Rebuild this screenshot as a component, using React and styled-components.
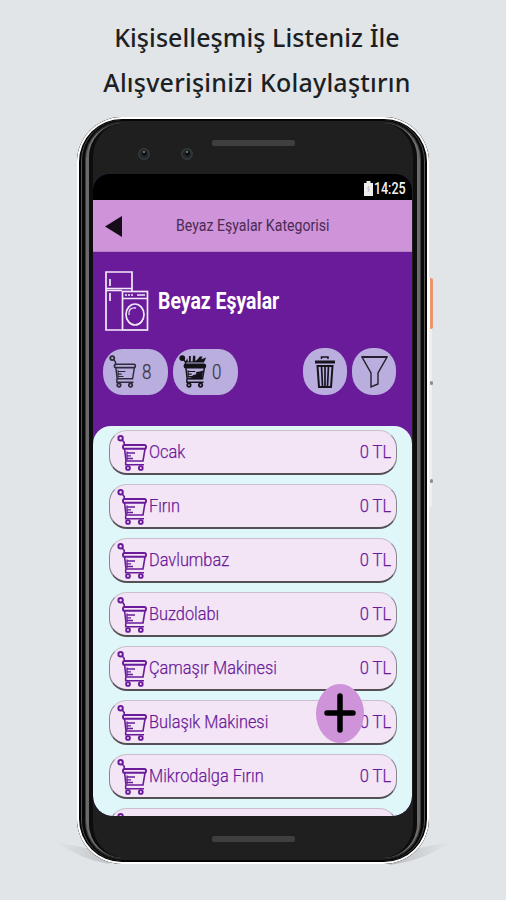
import React from "react";
import styled, { createGlobalStyle } from "styled-components";

const Global = createGlobalStyle`
  *{box-sizing:border-box}
  body{margin:0;background:#e1e5e8}
`;
const Page = styled.main`
  width:506px;height:900px;overflow:hidden;background:#e1e5e8;
  display:flex;flex-direction:column;align-items:center;
  font-family:Roboto,sans-serif;
`;
const Heading = styled.h1`
  margin:0;padding-top:15px;height:117px;display:flex;flex-direction:column;align-items:center;
  font:500 25px/45px "Noto Sans","Open Sans",sans-serif;color:#1c1f23;padding-left:8px;
`;
const Line = styled.span`
  display:block;white-space:nowrap;letter-spacing:${p => p.$ls}px;
`;
const Stage = styled.div`position:relative;width:352px;height:747px;`;
const Shadow = styled.svg`position:absolute;left:-30px;top:700px;`;
const SideKey = styled.i`
  position:absolute;left:351px;top:${p => p.$top}px;height:${p => p.$h}px;width:${p => p.$w}px;
  background:${p => p.$bg};border-radius:0 2px 2px 0;
`;
const SideDot = styled.i`
  position:absolute;left:353px;top:${p => p.$top}px;width:3px;height:4px;border-radius:2px;background:#8b8b8d;
`;
const Phone = styled.section`
  position:relative;width:352px;height:747px;border-radius:45px;padding:57px 17px 0 16px;
  background:#1f1f1f;
  box-shadow:inset 0 0 0 2px #fff,inset 0 0 0 4px #050505;
`;
const Rim = styled.div`
  position:absolute;left:${p => p.$in}px;right:${p => p.$in}px;top:${p => p.$y}px;bottom:${p => p.$y}px;
  border:solid ${p => p.$c};border-width:0 ${p => p.$w}px;border-radius:${p => 45 - p.$in}px;
`;
const Speaker = styled.i`
  position:absolute;left:135px;top:${p => p.$top}px;width:83px;height:6px;border-radius:2px;background:#3f3f3f;
`;
const Lens = styled.svg`position:absolute;left:${p => p.$left}px;top:30px;`;
const Screen = styled.div`
  position:relative;width:319px;height:642px;background:#6a1b9a;overflow:hidden;
  border-radius:16px 16px 20px 20px;display:flex;flex-direction:column;
`;
const Status = styled.div`
  height:26px;flex:none;background:#000;color:#f4f4f4;display:flex;justify-content:flex-end;
  align-items:center;padding:3px 6px 0 0;
`;
const Clock = styled.div`width:33px;display:flex;justify-content:flex-end;`;
const Txt = styled.span`
  display:block;white-space:nowrap;font-size:${p => p.$size}px;font-weight:${p => p.$weight || 400};
  -webkit-text-stroke:${p => p.$stroke || 0}px currentColor;
  line-height:1.2;transform:scaleX(${p => p.$sx || 1});transform-origin:${p => p.$from || "left"} center;
`;
const AppBar = styled.header`
  position:relative;height:52px;flex:none;background:#ce93d8;border-bottom:1px solid #b57fc4;
  display:flex;align-items:center;justify-content:center;color:#4a2b55;
`;
const Back = styled.svg`position:absolute;left:12px;top:15px;`;
const Hero = styled.div`
  height:174px;flex:none;padding:18px 16px 0 10px;color:#fff;
`;
const TitleRow = styled.div`display:flex;align-items:center;gap:9px;height:62px;`;
const Tools = styled.div`display:flex;align-items:center;margin-top:16px;`;
const Pill = styled.button`
  border:0;padding:0 0 0 6px;width:65px;height:46px;border-radius:19px/22px;background:#b9aedd;color:#3c3649;
  display:flex;align-items:center;gap:4px;margin-right:${p => p.$mr}px;font-family:inherit;
`;
const Round = styled.button`
  border:0;padding:0;width:44px;height:47px;border-radius:20px/22px;background:#b9aedd;
  display:flex;align-items:center;justify-content:center;margin-left:${p => p.$ml};
`;
const List = styled.ul`
  list-style:none;margin:0;padding:4px 15px 0 16px;flex:1;min-height:0;overflow:hidden;background:#e0f7fa;
  border-radius:18px 18px 20px 20px;display:flex;flex-direction:column;gap:9px;
`;
const Row = styled.li`
  height:45px;flex:none;width:288px;background:#f3e5f5;border-radius:18px;
  border:1px solid #c9bfca;border-bottom:2px solid #555055;border-right-color:#8c848c;border-left-color:#8c848c;
  display:flex;align-items:center;padding:1px 5px 0 7px;color:#6a1b9a;
`;
const Price = styled.div`margin-left:auto;`;
const Fab = styled.button`
  position:absolute;left:223px;top:509.5px;width:48px;height:59px;border:0;padding:0;border-radius:50%;
  background:#ce93d8;display:flex;align-items:center;justify-content:center;
`;

const Cart = ({ color, w = 32, h = 38, full }) => (
  <svg width={w} height={h} viewBox="0 0 32 38" fill="none" stroke={color} strokeWidth="1.6">
    <circle cx="3.6" cy="4.2" r="2.2" strokeWidth="2" fill={full ? color : "none"} />
    <path d="M5.2 6 L7.2 8.5 V12" />
    {full && <path d="M7 9 L9 4.5 L10 8 L11 8 V2 H13 V8 L15 8 L15.5 1.5 H18 V7.5 L20 6 L23 2.5 L26 2.5 L24.5 5.5 L30 3.5 L27.5 9Z" fill={color} stroke="none" />}
    <rect x="6" y="11" width="23" height="3.8" rx="1.6" strokeWidth="1.9" fill={full ? color : "none"} />
    <path d="M7.6 15 L9 27 H26 L28 15" />
    <path d="M8.7 27.2 V30.8 H27" />
    <path d="M10 17.5V26M10 19H18M10 21.8H14M10 24.5H16" strokeWidth="1.3" />
    {full && <path d="M11 26 L15 25 V23 L19 22 V19.5 L23 19 L26.5 18 L25.5 27.5H11Z" fill={color} stroke="none" />}
    <circle cx="11" cy="34" r="1.9" strokeWidth="1.9" />
    <circle cx="23.8" cy="34" r="1.9" strokeWidth="1.9" />
  </svg>
);

const items = [
  "Ocak", "Fırın", "Davlumbaz", "Buzdolabı", "Çamaşır Makinesi", "Bulaşık Makinesi", "Mikrodalga Fırın",
];

export default function App() {
  return (
    <Page>
      <Global />
      <Heading>
        <Line $ls={0.06}>Kişiselleşmiş Listeniz İle</Line>
        <Line $ls={0.22}>Alışverişinizi Kolaylaştırın</Line>
      </Heading>
      <Stage>
        <Shadow width="412" height="60">
          <defs>
            <linearGradient id="sl" x1="0" x2="1"><stop offset="0" stopColor="#c0c5c9" stopOpacity="0" /><stop offset="1" stopColor="#c0c4c7" /></linearGradient>
            <linearGradient id="sr" x1="1" x2="0"><stop offset="0" stopColor="#c0c5c9" stopOpacity="0" /><stop offset="1" stopColor="#b8bcc0" /></linearGradient>
          </defs>
          <path d="M8 25 L60 35 L62 47 Q36 43 8 25Z" fill="url(#sl)" />
          <path d="M404 25 L350 35 L342 48 Q376 44 404 25Z" fill="url(#sr)" />
        </Shadow>
        <SideKey $top={205} $h={185} $w={4} $bg="#f3eeee" />
        <SideKey $top={161} $h={51} $w={5} $bg="linear-gradient(90deg,#fff 2px,#ec9470 2px)" />
        <SideDot $top={264} />
        <SideDot $top={362} />
        <Phone>
          <Rim $in={4} $y={3} $w={1} $c="#555" />
          <Rim $in={5} $y={4} $w={3} $c="#080808" />
          <Rim $in={8} $y={5} $w={1} $c="#3c3c3c" />
          <Rim $in={9} $y={6} $w={3} $c="#6b6b6b" />
          <Rim $in={12} $y={7} $w={4} $c="#0d0d0d" />
          <Speaker $top={23} />
          <Speaker $top={719} />
          {[60, 103].map(l => (
            <Lens key={l} $left={l} width="14" height="14">
              <circle cx="7" cy="7" r="5.2" fill="#22282a" stroke="#343a3c" strokeWidth="1.5" />
              <circle cx="7.5" cy="6.5" r="2.2" fill="#0b0f10" /><circle cx="7" cy="5" r="1.1" fill="#7b8587" />
            </Lens>
          ))}
          <Screen>
            <Status>
              <svg width="9" height="15"><path d="M0 2H2.5V0H6.5V2H9V15H0Z" fill="#eee" /><path d="M5 5L3.5 8H5.5L4 11" stroke="#bbb" fill="none" /></svg>
              <Clock><Txt $size={16} $weight={500} $sx={0.78} $from="right">14:25</Txt></Clock>
            </Status>
            <AppBar>
              <Back width="18" height="23"><path d="M0 11.5L17 1V22Z" fill="#160b19" /></Back>
              <Txt $size={16.5} $sx={0.855} $from="center">Beyaz Eşyalar Kategorisi</Txt>
            </AppBar>
            <Hero>
              <TitleRow>
                <svg width="46" height="62" fill="none" stroke="#f3e9fa" strokeWidth="1.7">
                  <path d="M19 60H3V2H29V21M3 18.5H29M3 20.5H19M7 9V16M7 23V31" />
                  <rect x="19.5" y="21.5" width="25" height="38.5" /><path d="M19 28.5H45M34 25H42" /><path d="M22 25H30" strokeDasharray="2 1" />
                  <ellipse cx="32" cy="44.5" rx="9" ry="10.5" /><path d="M26 45Q25 37 33 38" strokeWidth="1.3" />
                </svg>
                <Txt $size={24} $weight={700} $sx={0.81}>Beyaz Eşyalar</Txt>
              </TitleRow>
              <Tools>
                <Pill $mr={5}><Cart color="#302b3c" w={29} h={35} /><Txt $size={20} $weight={300} $sx={0.85} $stroke={0.25}>8</Txt></Pill>
                <Pill $mr={0}><Cart color="#15131a" w={29} h={35} full /><Txt $size={20} $weight={300} $sx={0.85} $stroke={0.25}>0</Txt></Pill>
                <Round $ml="auto">
                  <svg width="22" height="34" stroke="#18141e" fill="none">
                    <path d="M7.5 4V2H14V4" strokeWidth="1.5" /><path d="M1 7H21" strokeWidth="3" />
                    <path d="M3.5 11H18.5L17 32H5Z" strokeWidth="2" /><path d="M7.5 11L8.5 31M11 11V31M14.5 11L13.5 31" strokeWidth="1.7" />
                  </svg>
                </Round>
                <Round $ml="5px">
                  <svg width="27" height="34" stroke="#241f2d" fill="none" strokeWidth="1.4"><path d="M1 2H26L17 18V29L10 32V18Z" /><path d="M1 2H26" strokeWidth="2" /></svg>
                </Round>
              </Tools>
            </Hero>
            <List>
              {items.map(n => (
                <Row key={n}>
                  <Cart color="#6a1b9a" />
                  <Txt $size={19} $weight={300} $sx={0.86} $stroke={0.25}>{n}</Txt>
                  <Price><Txt $size={19} $weight={300} $sx={0.87} $stroke={0.25} $from="right">0 TL</Txt></Price>
                </Row>
              ))}
              <Row><Cart color="#6a1b9a" /></Row>
            </List>
            <Fab>
              <svg width="34" height="42" stroke="#000" strokeWidth="5.5" strokeLinecap="round"><path d="M17 4V38M4 21H30" /></svg>
            </Fab>
          </Screen>
        </Phone>
      </Stage>
    </Page>
  );
}
